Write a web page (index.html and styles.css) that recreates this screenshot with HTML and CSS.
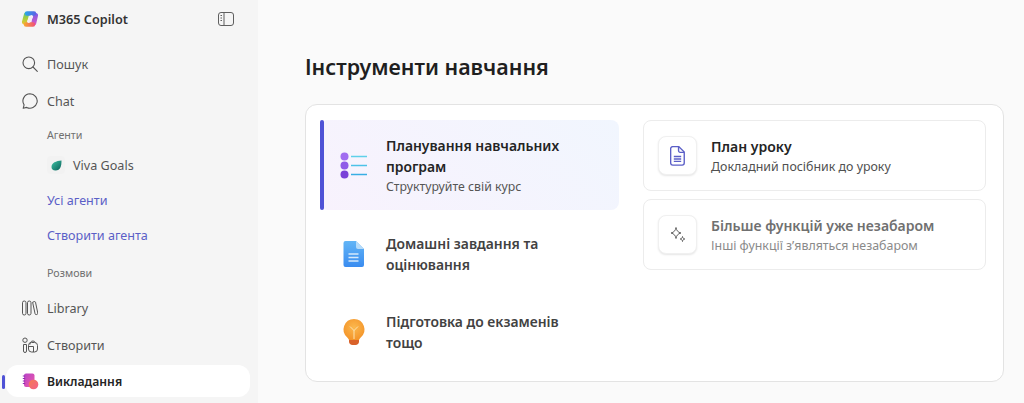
FILE: index.html
```html
<!DOCTYPE html>
<html lang="uk">
<head>
<meta charset="utf-8">
<title>M365 Copilot</title>
<link rel="stylesheet" href="styles.css">
</head>
<body>
<div class="app">
  <aside class="sidebar">
    <div class="brand">
      <svg class="brand-logo" width="18" height="18" viewBox="0 0 18 18" fill="none" stroke-linecap="round">
        <defs>
          <linearGradient id="cl2" gradientUnits="userSpaceOnUse" x1="0" y1="2" x2="0" y2="15"><stop offset="0" stop-color="#58c08a"/><stop offset=".5" stop-color="#a8cf3c"/><stop offset="1" stop-color="#f6bf30"/></linearGradient>
          <linearGradient id="cl3" gradientUnits="userSpaceOnUse" x1="0" y1="3" x2="0" y2="16"><stop offset="0" stop-color="#7a5ae6"/><stop offset="1" stop-color="#e25ac0"/></linearGradient>
          <linearGradient id="cl4" gradientUnits="userSpaceOnUse" x1="4" y1="0" x2="15" y2="0"><stop offset="0" stop-color="#2aa7e8"/><stop offset="1" stop-color="#5a62e6"/></linearGradient>
          <linearGradient id="cl5" gradientUnits="userSpaceOnUse" x1="3" y1="0" x2="14" y2="0"><stop offset="0" stop-color="#f7a82e"/><stop offset="1" stop-color="#f0507a"/></linearGradient>
        </defs>
        <path d="M5.500 4.500L3.500 12" stroke="url(#cl2)" stroke-width="5"/>
        <path d="M14.500 5.500L12.800 13" stroke="url(#cl3)" stroke-width="5"/>
        <path d="M6 3.500H13" stroke="url(#cl4)" stroke-width="4.400"/>
        <path d="M5 14.500H12" stroke="url(#cl5)" stroke-width="4.400"/>
        <path d="M10.500 6.800L7.800 11.300" stroke="#f6eef6" stroke-width="3.200"/>
      </svg>
      <span class="brand-name">M365 Copilot</span>
      <svg class="brand-toggle" width="16" height="14" viewBox="0 0 16 14" fill="none" stroke="#5f5f5f" stroke-width="1">
        <rect x=".5" y=".5" width="15" height="13" rx="2.500"/>
        <path d="M6 .5v13M2.500 3.500h1.500M2.500 6h1.500M2.500 8.500h1.500"/>
      </svg>
    </div>

    <a class="nav-row gap-search">
      <svg class="nav-icon" width="16" height="16" viewBox="0 0 16 16" fill="none" stroke="#555" stroke-width="1.100">
        <circle cx="6.800" cy="6.800" r="5.800"/><path d="M11 11l4.300 4.300" stroke-linecap="round"/>
      </svg>
      <span>Пошук</span>
    </a>
    <a class="nav-row gap-chat">
      <svg class="nav-icon" width="16" height="16" viewBox="0 0 16 16" fill="none" stroke="#555" stroke-width="1.100">
        <path d="M8 .8a7.200 7.200 0 1 1-3.300 13.600L1.200 15.300l.9-3.400A7.200 7.200 0 0 1 8 .8z" stroke-linejoin="round"/>
      </svg>
      <span>Chat</span>
    </a>
    <div class="section-label gap-agents">Агенти</div>
    <a class="nav-row gap-viva">
      <span class="agent-tile">
        <svg width="11" height="11" viewBox="0 0 11 11"><defs><linearGradient id="vg" x1="0" y1="0" x2="1" y2="1"><stop offset="0" stop-color="#3fc4a6"/><stop offset="1" stop-color="#0a5f58"/></linearGradient></defs><path d="M10.500.5C10.500 6 9.500 10.500 4.500 10.500 1.800 10.500.5 9 .5 7 .5 3 5 .8 10.500.5z" fill="url(#vg)"/></svg>
      </span>
      <span>Viva Goals</span>
    </a>
    <a class="nav-row link gap-tight">Усі агенти</a>
    <a class="nav-row link gap-tight">Створити агента</a>
    <div class="section-label gap-chats">Розмови</div>
    <a class="nav-row gap-library">
      <svg class="nav-icon" width="16" height="16" viewBox="0 0 16 16" fill="none" stroke="#555" stroke-width="1">
        <rect x=".5" y="1" width="3.500" height="14" rx="1.700"/><rect x="5.500" y="1" width="3.500" height="14" rx="1.700"/><path d="M10.600 2.200l1.700-.6c.6-.2 1 0 1.200.6l2.300 11c.1.600-.1 1-.7 1.200l-.8.200c-.6.100-1-.1-1.200-.7z"/>
      </svg>
      <span>Library</span>
    </a>
    <a class="nav-row gap-chat">
      <svg class="nav-icon" width="16" height="16" viewBox="0 0 16 16" fill="none" stroke="#555" stroke-width="1">
        <circle cx="3" cy="3.200" r="2.200"/><path d="M1.500 7.500h3v6.500a1.500 1.500 0 0 1-3 0z"/><rect x="6.500" y="5.500" width="9" height="9.500" rx="3"/><path d="M8 7.500a3 3 0 0 1 3-3.500 3 3 0 0 1 2.500 1.500M6.500 9.500h5v5.500"/>
      </svg>
      <span>Створити</span>
    </a>
    <a class="nav-row active gap-teach">
      <svg class="nav-icon" width="17" height="17" viewBox="0 0 17 17">
        <defs><linearGradient id="tg" x1="0" y1="0" x2="1" y2="1"><stop offset="0" stop-color="#b844c8"/><stop offset="1" stop-color="#ee5aa8"/></linearGradient><linearGradient id="tg2" x1="0" y1="0" x2="1" y2="1"><stop offset="0" stop-color="#f47a50"/><stop offset="1" stop-color="#f45f8c"/></linearGradient></defs>
        <rect x="2" y=".5" width="10.500" height="13.500" rx="2" fill="url(#tg)"/>
        <path d="M.8 3h2.400M.8 5.500h2.400M.8 8h2.400M.8 10.500h2.400" stroke="#8c2fb0" stroke-width="1"/>
        <circle cx="11.500" cy="11.500" r="4.800" fill="url(#tg2)"/>
      </svg>
      <span>Викладання</span>
    </a>
  </aside>

  <main class="main">
    <h1 class="page-title">Інструменти навчання</h1>
    <section class="panel">
      <div class="tool-list">
        <div class="tool selected">
          <svg class="tool-icon" width="28" height="27" viewBox="0 0 28 27">
            <circle cx="4.500" cy="4.500" r="4" fill="#a06cf0"/><circle cx="4.500" cy="13.500" r="4" fill="#8f5ae8"/><circle cx="4.500" cy="22.500" r="4" fill="#7a42d8"/>
            <path d="M11 4.500h16" stroke="#5fd0ea" stroke-width="1.500"/><path d="M11 13.500h16" stroke="#4cc2e8" stroke-width="1.500"/><path d="M11 22.500h16" stroke="#38aee4" stroke-width="1.500"/>
          </svg>
          <div class="tool-text">
            <div class="tool-title">Планування навчальних програм</div>
            <div class="tool-sub">Структуруйте свій курс</div>
          </div>
        </div>
        <div class="tool">
          <svg class="tool-icon" width="28" height="28" viewBox="0 0 28 28">
            <defs><linearGradient id="dg" x1="0" y1="0" x2="0" y2="1"><stop offset="0" stop-color="#62b5f6"/><stop offset="1" stop-color="#3a8cf0"/></linearGradient></defs>
            <path d="M5.500 1h10.500l8 8v16a2 2 0 0 1-2 2H5.500a2 2 0 0 1-2-2V3a2 2 0 0 1 2-2z" fill="url(#dg)"/>
            <path d="M16 1l8 8h-6a2 2 0 0 1-2-2z" fill="#b7dcf9"/>
            <path d="M8.500 14h10M8.500 17.500h10M8.500 21h10" stroke="#d5e9fb" stroke-width="1.500"/>
          </svg>
          <div class="tool-text">
            <div class="tool-title muted">Домашні завдання та оцінювання</div>
          </div>
        </div>
        <div class="tool">
          <svg class="tool-icon" width="28" height="28" viewBox="0 0 28 28">
            <defs><radialGradient id="bg" cx=".5" cy=".4" r=".6"><stop offset="0" stop-color="#fbb84e"/><stop offset="1" stop-color="#f4952a"/></radialGradient></defs>
            <path d="M14 1a10.500 10.500 0 0 1 6.500 18.700c-.9.800-1.300 1.500-1.500 2.300H9c-.2-.8-.6-1.500-1.500-2.300A10.500 10.500 0 0 1 14 1z" fill="url(#bg)"/>
            <path d="M14 21v-9M10 8.500l4 4 4-4" stroke="#fde3b0" stroke-width="1" fill="none"/>
            <path d="M9 22h10v1.500c0 2-1.500 3.500-3.500 3.500h-3C10.500 27 9 25.500 9 23.500z" fill="#d9622a"/>
          </svg>
          <div class="tool-text">
            <div class="tool-title muted">Підготовка до екзаменів тощо</div>
          </div>
        </div>
      </div>
      <div class="card-list">
        <div class="card">
          <span class="card-tile">
            <svg width="15" height="20" viewBox="0 0 14 19" fill="none" stroke="#5b5fc7" stroke-width="1.300">
              <path d="M2.500.6h5.700l5.200 5.200v10.400a2 2 0 0 1-2 2h-8.900a2 2 0 0 1-2-2V2.600a2 2 0 0 1 2-2z"/><path d="M8 .8v3.700a1.500 1.500 0 0 0 1.500 1.500h3.700M3.500 10h7M3.500 12.300h7M3.500 14.600h7"/>
            </svg>
          </span>
          <div class="card-text">
            <div class="card-title">План уроку</div>
            <div class="card-sub">Докладний посібник до уроку</div>
          </div>
        </div>
        <div class="card disabled">
          <span class="card-tile">
            <svg width="18" height="18" viewBox="0 0 18 18" fill="none" stroke="#616161" stroke-width="1">
              <path d="M7 1.500c.6 3.300 2 4.800 5 5.500-3 .7-4.400 2.200-5 5.500-.6-3.300-2-4.800-5-5.500 3-.7 4.400-2.200 5-5.500z" stroke-linejoin="round"/><path d="M13.500 10.500c.2 1.500.8 2.100 2.300 2.500-1.500.4-2.100 1-2.300 2.500-.2-1.500-.8-2.100-2.300-2.500 1.500-.4 2.100-1 2.300-2.500z" stroke-linejoin="round"/>
            </svg>
          </span>
          <div class="card-text">
            <div class="card-title">Більше функцій уже незабаром</div>
            <div class="card-sub">Інші функції з’являться незабаром</div>
          </div>
        </div>
      </div>
    </section>
  </main>
</div>
</body>
</html>
```
FILE: styles.css
```css
* { box-sizing: border-box; }
html, body { margin: 0; height: 403px; overflow: hidden; }
body { font-family: "Noto Sans", "Open Sans", sans-serif; color: #242424; background: #fafafa; }
.app { display: flex; height: 403px; }

.sidebar { width: 258px; flex: none; background: #f5f5f5; padding: 0 8px 0 6px; display: flex; flex-direction: column; }
.brand { height: 38px; display: flex; align-items: center; padding-left: 15px; }
.brand-logo { flex: none; margin-right: 8px; }
.brand-name { font-size: 12.7px; font-weight: 600; color: #333; flex: 1; }
.brand-toggle { flex: none; margin-right: 16px; }

.nav-row { height: 32px; flex: none; display: flex; align-items: center; padding-left: 16px; font-size: 12.6px; color: #555; border-radius: 12px; position: relative; }
.nav-icon { flex: none; margin-right: 9px; }
.link { color: #5b5fc7; padding-left: 41px; }
.section-label { height: 20px; flex: none; display: flex; align-items: center; padding-left: 41px; font-size: 10.7px; color: #707070; }
.agent-tile { width: 18px; height: 18px; margin: 0 8px 0 25px; display: flex; align-items: center; justify-content: center; background: #f2f2f2; border-radius: 4px; flex: none; }

.gap-search { margin-top: 10px; }
.gap-chat { margin-top: 5px; }
.gap-agents { margin-top: 8px; }
.gap-viva { margin-top: 4px; }
.gap-tight { margin-top: 3px; }
.gap-chats { margin-top: 12px; }
.gap-library { margin-top: 9px; }
.gap-teach { margin-top: 4px; }

.active { background: #fff; color: #242424; font-weight: 600; font-size: 12.2px; }
.active .nav-icon { margin-right: 8px; }
.active::before { content: ""; position: absolute; left: -4px; top: 10px; width: 3px; height: 14px; border-radius: 2px; background: #4f52d6; }

.main { flex: 1; padding: 0 20px 0 47px; min-width: 0; }
.page-title { margin: 0; height: 104px; padding-top: 50px; font-size: 21.4px; line-height: 34px; font-weight: 600; color: #1f1f1f; }
.panel { height: 278px; background: #fff; border: 1px solid #e3e3e3; border-radius: 12px; padding: 15px 17px 0 14px; display: flex; gap: 24px; }

.tool-list { width: 299px; flex: none; display: flex; flex-direction: column; }
.tool { display: flex; flex: none; align-items: center; height: 78px; padding-left: 20px; border-radius: 8px; position: relative; }
.tool.selected { height: 90px; margin-bottom: 5px; background: linear-gradient(45deg, #f8f2fd, #f1f6fe); }
.tool.selected::before { content: ""; position: absolute; left: 0; top: 0; bottom: 0; width: 4px; border-radius: 2px; background: #4f52d6; }
.tool-icon { flex: none; margin-right: 18px; }
.tool-text { width: 190px; }
.tool-title { font-size: 13.9px; line-height: 21px; font-weight: 600; color: #242424; }
.tool-title.muted { color: #424242; }
.tool-sub { font-size: 12.3px; line-height: 19px; color: #555; }

.card-list { flex: 1; display: flex; flex-direction: column; gap: 8px; }
.card { height: 71px; flex: none; display: flex; align-items: center; gap: 14px; padding-left: 14px; border: 1px solid #ececec; border-radius: 8px; background: #fff; }
.card-tile { width: 39px; height: 39px; flex: none; display: flex; align-items: center; justify-content: center; background: #fff; border: 1px solid #f0f0f0; border-radius: 8px; box-shadow: 0 1px 2px rgba(0,0,0,.1); }
.card-text { margin-top: 2px; }
.card-title { font-size: 14px; line-height: 20px; font-weight: 600; color: #242424; }
.card-sub { font-size: 12.4px; line-height: 20px; color: #505050; }
.disabled .card-title { color: #707070; }
.disabled .card-sub { color: #8a8a8a; }
```
